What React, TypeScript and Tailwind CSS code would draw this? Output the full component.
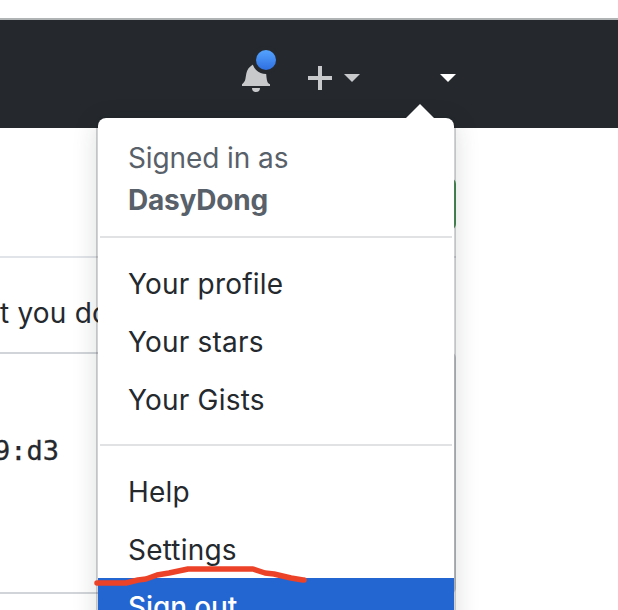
import type { ReactNode } from 'react';

function MenuItem({ children, active = false }: { children: ReactNode; active?: boolean }) {
  return (
    <a
      className={`block h-[58px] pl-[30px] whitespace-nowrap ${
        active
          ? 'bg-[#2366d1] leading-[59px] font-medium tracking-[-0.1px] text-white'
          : 'leading-[60px] tracking-[0.2px] text-[#24292e]'
      }`}
    >
      {children}
    </a>
  );
}

function Divider() {
  return <div className="mx-0.5 my-4 h-0.5 bg-[#e1e2e3]" />;
}

function Header() {
  return (
    <header className="h-[110px] border-t-2 border-[#b1b4b5] bg-[#25292e]">
      <svg className="block" width="618" height="108" viewBox="0 20 618 108">
        <defs>
          <linearGradient id="dot" x1="0" y1="0" x2="0" y2="1">
            <stop offset="0" stopColor="#54a3ff" />
            <stop offset="1" stopColor="#2f6fe0" />
          </linearGradient>
        </defs>
        <path
          fill="#c8c9cb"
          d="M242 86v-1.800c1.600-1.200 2.900-2.700 3.400-5.200.900-4.200.600-7.400 3-10.600 1.200-1.500 2.700-2.400 4.600-4L266 72c.400 4 .500 7.200 1.300 9.400.500 1.300 1.400 2.100 2.700 2.800V86zM252 88h8a4 4 0 0 1-8 0z"
        />
        <circle cx="266" cy="60" r="14" fill="#25292e" />
        <circle cx="266" cy="60" r="10" fill="url(#dot)" />
        <path fill="#c8c9cb" d="M318 66h4v10h10v4h-10v10h-4V80h-10v-4h10zM344 74h16l-8 8z" />
        <path fill="#fff" d="M440 74h16l-8 8z" />
      </svg>
    </header>
  );
}

function UserMenu() {
  return (
    <div className="absolute left-24 top-[116px] h-[520px] w-[360px] rounded-[10px] border-2 border-[rgba(27,31,35,0.2)] bg-white bg-clip-padding pt-[19px] shadow-[0_6px_24px_rgba(27,31,35,0.15)]">
      <svg className="absolute -top-3.5 left-[308px]" width="28" height="14" viewBox="0 0 28 14">
        <path fill="#fff" d="M0 14 14 0l14 14z" />
      </svg>
      <div className="-mb-px pl-[30px] leading-[42px] text-[#586069]">
        <div className="tracking-[-0.1px]">Signed in as</div>
        <div className="font-bold tracking-[-0.2px]">DasyDong</div>
      </div>
      <Divider />
      <MenuItem>Your profile</MenuItem>
      <MenuItem>Your stars</MenuItem>
      <MenuItem>Your Gists</MenuItem>
      <Divider />
      <MenuItem>Help</MenuItem>
      <MenuItem>Settings</MenuItem>
      <MenuItem active>Sign out</MenuItem>
    </div>
  );
}

export default function App() {
  return (
    <div className="relative h-[610px] w-[618px] overflow-hidden bg-white pt-[18px] font-['Inter',sans-serif] text-[28px] text-[#24292e]">
      <Header />
      <main className="w-[456px]">
        <div className="flex h-[130px] items-start justify-end border-b-2 border-[#e1e4e8] pt-[50px]">
          <div className="h-[52px] w-[180px] rounded-md border-2 border-[#4f9a5a] bg-[#2ea44f]" />
        </div>
        <div className="h-[94px] pt-[34px] leading-[42px] tracking-[0.2px] whitespace-nowrap">t you do</div>
        <div className="h-[242px] rounded-r-md border-y-2 border-r-2 border-[#d1d5da] pt-[76px] font-['DejaVu_Sans_Mono',monospace] text-[27px] leading-[42px]">
          <div className="-ml-1.5 [-webkit-text-stroke:0.3px]">9:d3</div>
        </div>
      </main>
      <UserMenu />
      <svg className="absolute left-0 top-[560px]" width="320" height="50" viewBox="0 560 320 50">
        <path
          d="M97 583h29l12-3 8-1 11-4 12-2 19-4h65l12 4 9 1 17 4 12 2h1"
          fill="none"
          stroke="#ec4228"
          strokeWidth="5.500"
          strokeLinecap="round"
          strokeLinejoin="round"
        />
      </svg>
    </div>
  );
}
